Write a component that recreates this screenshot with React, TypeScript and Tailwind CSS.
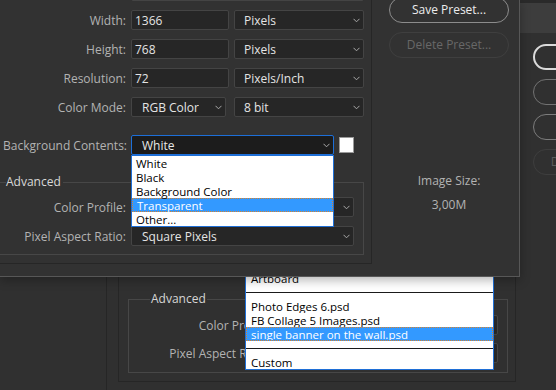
import React from "react";

const Chevron = () => (
  <svg width="7" height="5" viewBox="0 0 7 5" className="shrink-0">
    <path d="M0.5 0.8 L3.5 3.8 L6.5 0.8" fill="none" stroke="#a9a9a9" strokeWidth="1" />
  </svg>
);

const Select = ({ value, className = "" }: { value: string; className?: string }) => (
  <div
    className={`h-5 flex items-center justify-between pl-[9px] pr-[3px] bg-[#262626] border border-[#444444] rounded-[2px] text-[#e4e4e4] leading-[19px] ${className}`}
  >
    <span className="whitespace-nowrap overflow-hidden">{value}</span>
    <Chevron />
  </div>
);

const Input = ({ value }: { value: string }) => (
  <div className="w-[98px] h-5 flex items-center pl-[3px] bg-[#262626] border border-[#444444] rounded-[2px] text-[#e4e4e4] leading-[19px]">
    {value}
  </div>
);

const Label = ({ children, className = "w-[126px]" }: { children: React.ReactNode; className?: string }) => (
  <div className={`${className} shrink-0 text-right text-[#b3b3b3] leading-[19px] whitespace-nowrap`}>{children}</div>
);

const sizeRows = [
  { label: "Width:", value: "1366", unit: "Pixels" },
  { label: "Height:", value: "768", unit: "Pixels" },
  { label: "Resolution:", value: "72", unit: "Pixels/Inch" },
];

const bgOptions = ["White", "Black", "Background Color", "Transparent", "Other..."];

const presetItems = [
  { name: "Default Photoshop Size" },
  { name: "Artboard" },
  { sep: true },
  { name: "Photo Edges 6.psd" },
  { name: "FB Collage 5 Images.psd" },
  { name: "single banner on the wall.psd", active: true },
  { sep: true },
  { name: "Custom" },
];

export default function App() {
  return (
    <div className="relative w-[556px] h-[390px] overflow-hidden bg-[#303030] font-['Open_Sans','Noto_Sans',sans-serif] text-[12px]">
      {/* Dialog behind */}
      <div className="absolute inset-0 flex flex-col">
        <div className="h-[3px] bg-[#2a2a2a]" />
        <div className="h-[30px] bg-[#3d3d3d]" />
        <div className="flex flex-1">
          <div className="w-[107px] shrink-0 border-r border-[#262626]" />
          <div className="w-[413px] shrink-0">
            <div className="ml-[11px] mt-[167px] w-[398px] h-[182px] border border-[#262626] pt-[98px]">
              <div className="relative ml-[9px] w-[380px] h-[74px] border border-[#474747] pt-[15px] flex flex-col gap-[8px]">
                <div className="absolute left-[21px] top-[-9px] leading-4 px-[1px] bg-[#303030] text-[#d6d6d6]">
                  Advanced
                </div>
                <div className="flex items-center h-5">
                  <Label className="w-[142px]">Color Profile:</Label>
                  <Select value="Working RGB: sRGB" className="ml-[5px] w-[222px]" />
                </div>
                <div className="flex items-center h-5">
                  <Label className="w-[142px]">Pixel Aspect Ratio:</Label>
                  <Select value="Square Pixels" className="ml-[5px] w-[222px]" />
                </div>
              </div>
            </div>
          </div>
          <div className="flex-1 pl-[13px] pt-[11px] flex flex-col gap-[9px]">
            <div className="w-[120px] h-[26px] shrink-0 rounded-full border-2 border-[#dadada] flex items-center justify-center text-[#f0f0f0]">
              OK
            </div>
            <div className="w-[120px] h-[26px] shrink-0 rounded-full border border-[#727272] flex items-center justify-center text-[#e0e0e0]">
              Cancel
            </div>
            <div className="w-[120px] h-[26px] shrink-0 rounded-full border border-[#7c7c7c] flex items-center justify-center text-[#4c9dff] whitespace-nowrap">
              Save Preset...
            </div>
            <div className="w-[120px] h-[26px] shrink-0 rounded-full border border-[#3e3e3e] flex items-center justify-center text-[#5c5c5c] whitespace-nowrap">
              Delete Preset...
            </div>
          </div>
        </div>
      </div>

      {/* Preset dropdown list of the dialog behind */}
      <div className="absolute left-[245px] top-[256px] w-[249px] bg-white border border-[#1f6fd6] font-['Open_Sans',sans-serif] text-[11.5px] text-black">
        {presetItems.map((item, i) =>
          item.sep ? (
            <div key={i} className="h-[14px] flex items-center">
              <div className="w-full h-px bg-[#1a1a1a]" />
            </div>
          ) : (
            <div
              key={i}
              className={`h-[14px] whitespace-nowrap overflow-hidden ${
                item.active
                  ? "bg-[#3399ff] text-white border border-dotted border-[#d8812a] pl-[4px] leading-[13px]"
                  : "pl-[5px] leading-[16px]"
              }`}
            >
              {item.name}
            </div>
          )
        )}
      </div>

      {/* Front dialog */}
      <div className="absolute left-0 top-0 w-[520px] h-[277px] flex bg-[#323232] border-r border-b border-[#575757] shadow-[0_3px_10px_rgba(0,0,0,0.3)]">
        <div className="w-[372px] h-[264px] shrink-0 border-r border-b border-[#262626] flex flex-col">
          <div className="-mt-[19px] flex flex-col gap-[9px]">
            <div className="flex items-center h-5">
              <Label>Artboards:</Label>
              <Select value="" className="ml-[5px] w-[233px]" />
            </div>
            {sizeRows.map(row => (
              <div key={row.label} className="flex items-center h-5">
                <Label>{row.label}</Label>
                <div className="ml-[5px]">
                  <Input value={row.value} />
                </div>
                <Select value={row.unit} className="ml-[5px] w-[130px]" />
              </div>
            ))}
            <div className="flex items-center h-5">
              <Label>Color Mode:</Label>
              <Select value="RGB Color" className="ml-[5px] w-[95px] pl-[10px]" />
              <Select value="8 bit" className="ml-[8px] w-[130px]" />
            </div>
          </div>

          <div className="mt-[18px] flex items-center h-5">
            <Label className="w-[127px]">Background Contents:</Label>
            <div className="relative ml-[4px] w-[203px]">
              <div className="h-5 flex items-center justify-between pl-[10px] pr-[3px] bg-[#1c1c1c] border border-[#1d6fd8] rounded-[2px] text-[#e8e8e8] leading-[19px]">
                <span>White</span>
                <Chevron />
              </div>
              <div className="absolute left-0 top-full w-full bg-white border border-[#1f6fd6] text-[11.5px] text-black z-10">
                {bgOptions.map(opt => (
                  <div
                    key={opt}
                    className={`h-[14px] whitespace-nowrap ${
                      opt === "Transparent"
                        ? "bg-[#3399ff] text-white border border-dotted border-[#d8812a] pl-[4px] leading-[13px]"
                        : "pl-[4px] leading-[16px]"
                    }`}
                  >
                    {opt}
                  </div>
                ))}
              </div>
            </div>
            <div className="ml-[5px] w-[15px] h-[16px] bg-white border border-[#9a9a9a]" />
          </div>

          <div className="relative mt-[27px] -ml-[10px] w-[374px] h-[73px] border-t border-r border-b border-[#474747] pt-[14px] flex flex-col gap-[9px]">
            <div className="absolute left-[16px] top-[-9px] leading-4 pr-[2px] bg-[#323232] text-[#d8d8d8]">Advanced</div>
            <div className="flex items-center h-5">
              <Label className="w-[136px]">Color Profile:</Label>
              <Select value="sRGB IEC61966-2.1" className="ml-[5px] w-[223px]" />
            </div>
            <div className="flex items-center h-5">
              <Label className="w-[136px]">Pixel Aspect Ratio:</Label>
              <Select value="Square Pixels" className="ml-[5px] w-[223px] pl-[10px]" />
            </div>
          </div>
        </div>

        <div className="flex-1 flex flex-col">
          <div className="-mt-[3px] ml-[17px] w-[120px] h-[26px] rounded-full border border-[#8c8c8c] flex items-center justify-center text-[#ececec]">
            Save Preset...
          </div>
          <div className="mt-[9px] ml-[17px] w-[120px] h-[26px] rounded-full border border-[#3f3f3f] flex items-center justify-center text-[#686868]">
            Delete Preset...
          </div>
          <div className="mt-[115px] ml-[17px] w-[120px] flex flex-col items-center gap-[8px] text-[#b3b3b3] leading-4">
            <div>Image Size:</div>
            <div>3,00M</div>
          </div>
        </div>
      </div>
    </div>
  );
}
